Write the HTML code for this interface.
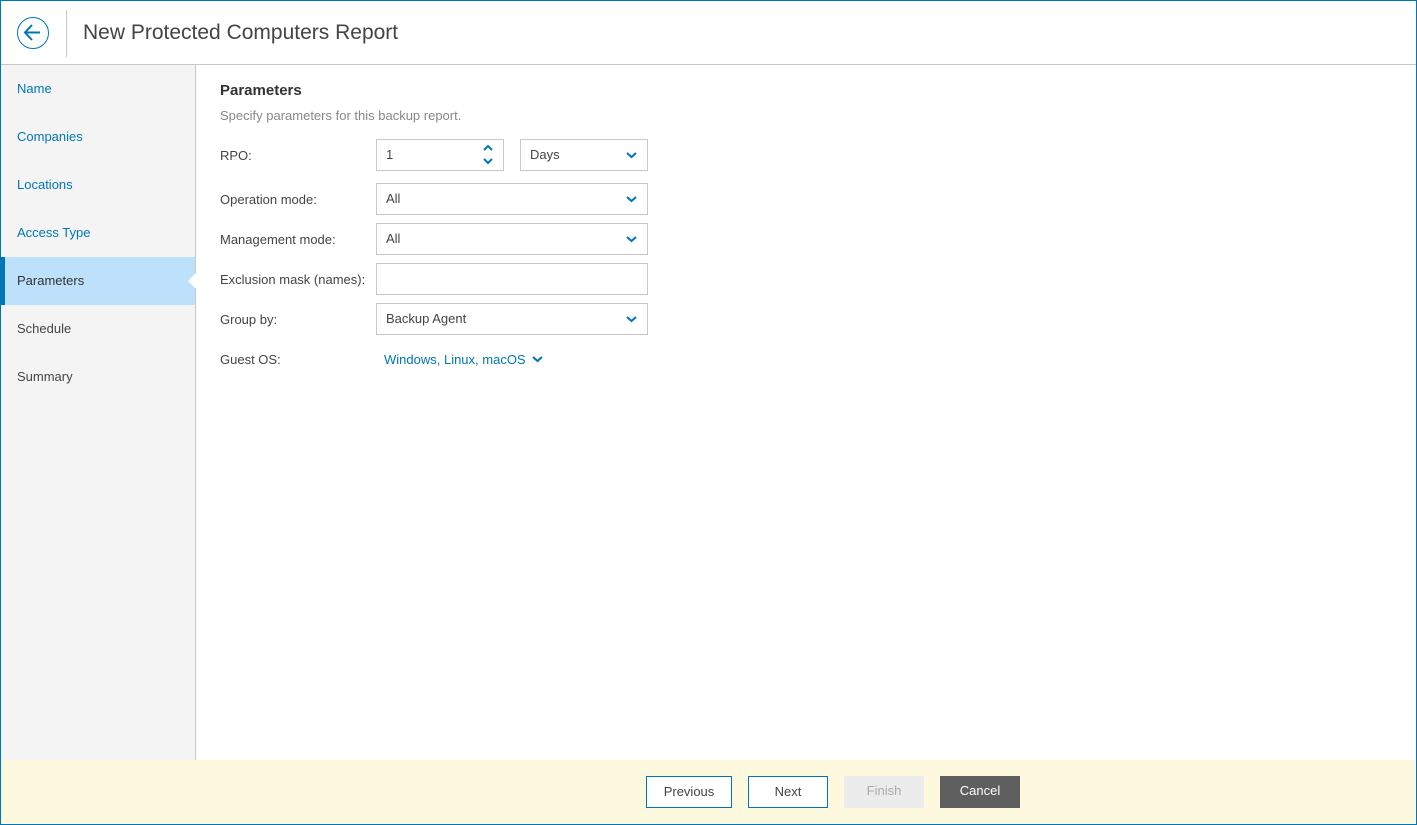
<!DOCTYPE html>
<html><head><style>
*{box-sizing:border-box;margin:0;padding:0}
body{width:1417px;height:825px;overflow:hidden;font-family:"Liberation Sans",sans-serif;font-size:13px;color:#444;background:#fff}
.frame{position:absolute;left:0;top:0;width:1417px;height:825px;border:1px solid #0076b6}
.hdr{position:absolute;left:1px;top:1px;width:1415px;height:64px;border-bottom:1px solid #c8c8c8;background:#fff}
.back{position:absolute;left:16px;top:16px;width:32px;height:32px;border:1.5px solid #0076b6;border-radius:50%}
.vsep{position:absolute;left:65px;top:9px;width:1px;height:47px;background:#c8c8c8}
.title{position:absolute;left:82px;top:20px;font-size:21px;color:#444}
.side{position:absolute;left:1px;top:65px;width:195px;height:695px;background:#f4f4f4;border-right:1px solid #c8c8c8}
.item{position:absolute;left:0;width:194px;height:48px;line-height:48px;padding-left:16px;color:#0076b6;font-size:13px}
.item.act{background:#bde0fb;color:#333;border-left:4px solid #0076b6;padding-left:12px}
.item.dis{color:#444}
.arrow{position:absolute;right:-1px;top:16px;width:0;height:0;border-top:8px solid transparent;border-bottom:8px solid transparent;border-right:8px solid #fff}
.h{position:absolute;left:220px;top:82px;font-size:15px;font-weight:bold;color:#333}
.sub{position:absolute;left:220px;top:108px;color:#888}
.lbl{position:absolute;left:220px;color:#444}
.box{position:absolute;height:32px;border:1px solid #c8c8c8;background:#fff;padding-left:9px;line-height:30px;color:#444}
.chev{position:absolute;right:10px;top:11px}
.guest{position:absolute;left:384px;top:352px;color:#0076b6}
.foot{position:absolute;left:1px;top:760px;width:1415px;height:64px;background:#fdf9de}
.btn{position:absolute;top:776px;height:32px;width:80px;text-align:center;line-height:30px;font-size:13px}
</style></head><body>
<div class="frame"></div>
<div class="hdr">
 <div class="back"><svg width="29" height="29" viewBox="0 0 29 29" style="position:absolute;left:0;top:0"><path d="M7 14.5H22M14 7L7 14.5L14 22" fill="none" stroke="#0076b6" stroke-width="2"/></svg></div>
 <div class="vsep"></div>
 <div class="title">New Protected Computers Report</div>
</div>
<div class="side">
 <div class="item" style="top:0">Name</div>
 <div class="item" style="top:48px">Companies</div>
 <div class="item" style="top:96px">Locations</div>
 <div class="item" style="top:144px">Access Type</div>
 <div class="item act" style="top:192px">Parameters<div class="arrow"></div></div>
 <div class="item dis" style="top:240px">Schedule</div>
 <div class="item dis" style="top:288px">Summary</div>
</div>
<div class="h">Parameters</div>
<div class="sub">Specify parameters for this backup report.</div>
<div class="lbl" style="top:148px">RPO:</div>
<div class="lbl" style="top:192px">Operation mode:</div>
<div class="lbl" style="top:232px">Management mode:</div>
<div class="lbl" style="top:272px">Exclusion mask (names):</div>
<div class="lbl" style="top:312px">Group by:</div>
<div class="lbl" style="top:352px">Guest OS:</div>
<div class="box" style="left:376px;top:139px;width:128px">1
 <svg width="12" height="26" style="position:absolute;right:9px;top:2px"><path d="M2 8L6 4L10 8M2 17L6 21L10 17" fill="none" stroke="#0076b6" stroke-width="2"/></svg></div>
<div class="box" style="left:520px;top:139px;width:128px">Days<svg class="chev" width="11" height="8"><path d="M1 2L5.5 6L10 2" fill="none" stroke="#0076b6" stroke-width="2"/></svg></div>
<div class="box" style="left:376px;top:183px;width:272px">All<svg class="chev" width="11" height="8"><path d="M1 2L5.5 6L10 2" fill="none" stroke="#0076b6" stroke-width="2"/></svg></div>
<div class="box" style="left:376px;top:223px;width:272px">All<svg class="chev" width="11" height="8"><path d="M1 2L5.5 6L10 2" fill="none" stroke="#0076b6" stroke-width="2"/></svg></div>
<div class="box" style="left:376px;top:263px;width:272px"></div>
<div class="box" style="left:376px;top:303px;width:272px">Backup Agent<svg class="chev" width="11" height="8"><path d="M1 2L5.5 6L10 2" fill="none" stroke="#0076b6" stroke-width="2"/></svg></div>
<div class="guest">Windows, Linux, macOS <svg width="11" height="8" style="margin-left:3px;vertical-align:1px"><path d="M1 2L5.5 6L10 2" fill="none" stroke="#0076b6" stroke-width="2"/></svg></div>
<div class="foot"></div>
<div class="btn" style="left:646px;width:86px;border:1px solid #0076b6;background:#fff;color:#444">Previous</div>
<div class="btn" style="left:748px;border:1px solid #0076b6;background:#fff;color:#444">Next</div>
<div class="btn" style="left:844px;background:#ececec;color:#aaa">Finish</div>
<div class="btn" style="left:940px;background:#5f5f5f;color:#fff">Cancel</div>
</body></html>
